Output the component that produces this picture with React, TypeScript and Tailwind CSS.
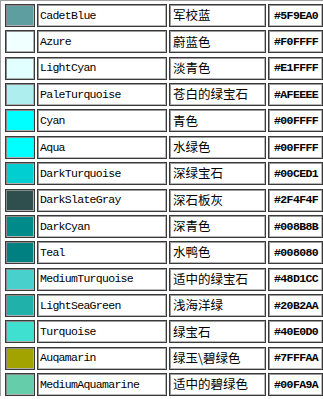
import React from "react";

type Row = { swatch: string; name: string; zh: string; hex: string };

const rows: Row[] = [
  { swatch: "#5F9EA0", name: "CadetBlue", zh: "军校蓝", hex: "#5F9EA0" },
  { swatch: "#F0FFFF", name: "Azure", zh: "蔚蓝色", hex: "#F0FFFF" },
  { swatch: "#E1FFFF", name: "LightCyan", zh: "淡青色", hex: "#E1FFFF" },
  { swatch: "#AFEEEE", name: "PaleTurquoise", zh: "苍白的绿宝石", hex: "#AFEEEE" },
  { swatch: "#00FFFF", name: "Cyan", zh: "青色", hex: "#00FFFF" },
  { swatch: "#00FFFF", name: "Aqua", zh: "水绿色", hex: "#00FFFF" },
  { swatch: "#00CED1", name: "DarkTurquoise", zh: "深绿宝石", hex: "#00CED1" },
  { swatch: "#2F4F4F", name: "DarkSlateGray", zh: "深石板灰", hex: "#2F4F4F" },
  { swatch: "#008B8B", name: "DarkCyan", zh: "深青色", hex: "#008B8B" },
  { swatch: "#008080", name: "Teal", zh: "水鸭色", hex: "#008080" },
  { swatch: "#48D1CC", name: "MediumTurquoise", zh: "适中的绿宝石", hex: "#48D1CC" },
  { swatch: "#20B2AA", name: "LightSeaGreen", zh: "浅海洋绿", hex: "#20B2AA" },
  { swatch: "#40E0D0", name: "Turquoise", zh: "绿宝石", hex: "#40E0D0" },
  { swatch: "#A3A300", name: "Auqamarin", zh: "绿玉\\碧绿色", hex: "#7FFFAA" },
  { swatch: "#66CDAA", name: "MediumAquamarine", zh: "适中的碧绿色", hex: "#00FA9A" },
];

const cell =
  "h-full flex items-center border border-[#3a3a3a] shadow-[inset_1px_1px_0_0_#9a9a9a,inset_-1px_-1px_0_0_#b8b8b8] bg-white";

export default function App() {
  return (
    <div className="w-[323px] h-[399px] overflow-hidden bg-white">
      <div className="border-l border-t border-[#a0a0a0] pl-[4px] pt-[3px] flex flex-col gap-[3.36px]">
        {rows.map((r, i) => (
          <div key={i} className="flex gap-[2px] h-[23px]">
            <div
              className="w-[30px] h-full border border-[#3a3a3a] shadow-[inset_1px_1px_0_0_#8a8a8a,inset_-1px_-1px_0_0_#b0b0b0]"
              style={{ backgroundColor: r.swatch }}
            />
            <div className={`${cell} w-[130px] pl-[2px]`}>
              <span className="text-[11.5px] leading-none text-black tracking-[-0.7px] font-['Liberation_Mono',monospace]">
                {r.name}
              </span>
            </div>
            <div className={`${cell} w-[97px] pl-[3px]`}>
              <span className="text-[12.5px] leading-none text-black font-['Noto_Sans_CJK_SC',sans-serif]">
                {r.zh}
              </span>
            </div>
            <div className={`${cell} w-[55px] pl-[5px]`}>
              <span className="text-[11.5px] leading-none font-bold text-black tracking-[-0.6px] font-['Liberation_Mono',monospace]">
                {r.hex}
              </span>
            </div>
          </div>
        ))}
      </div>
    </div>
  );
}
